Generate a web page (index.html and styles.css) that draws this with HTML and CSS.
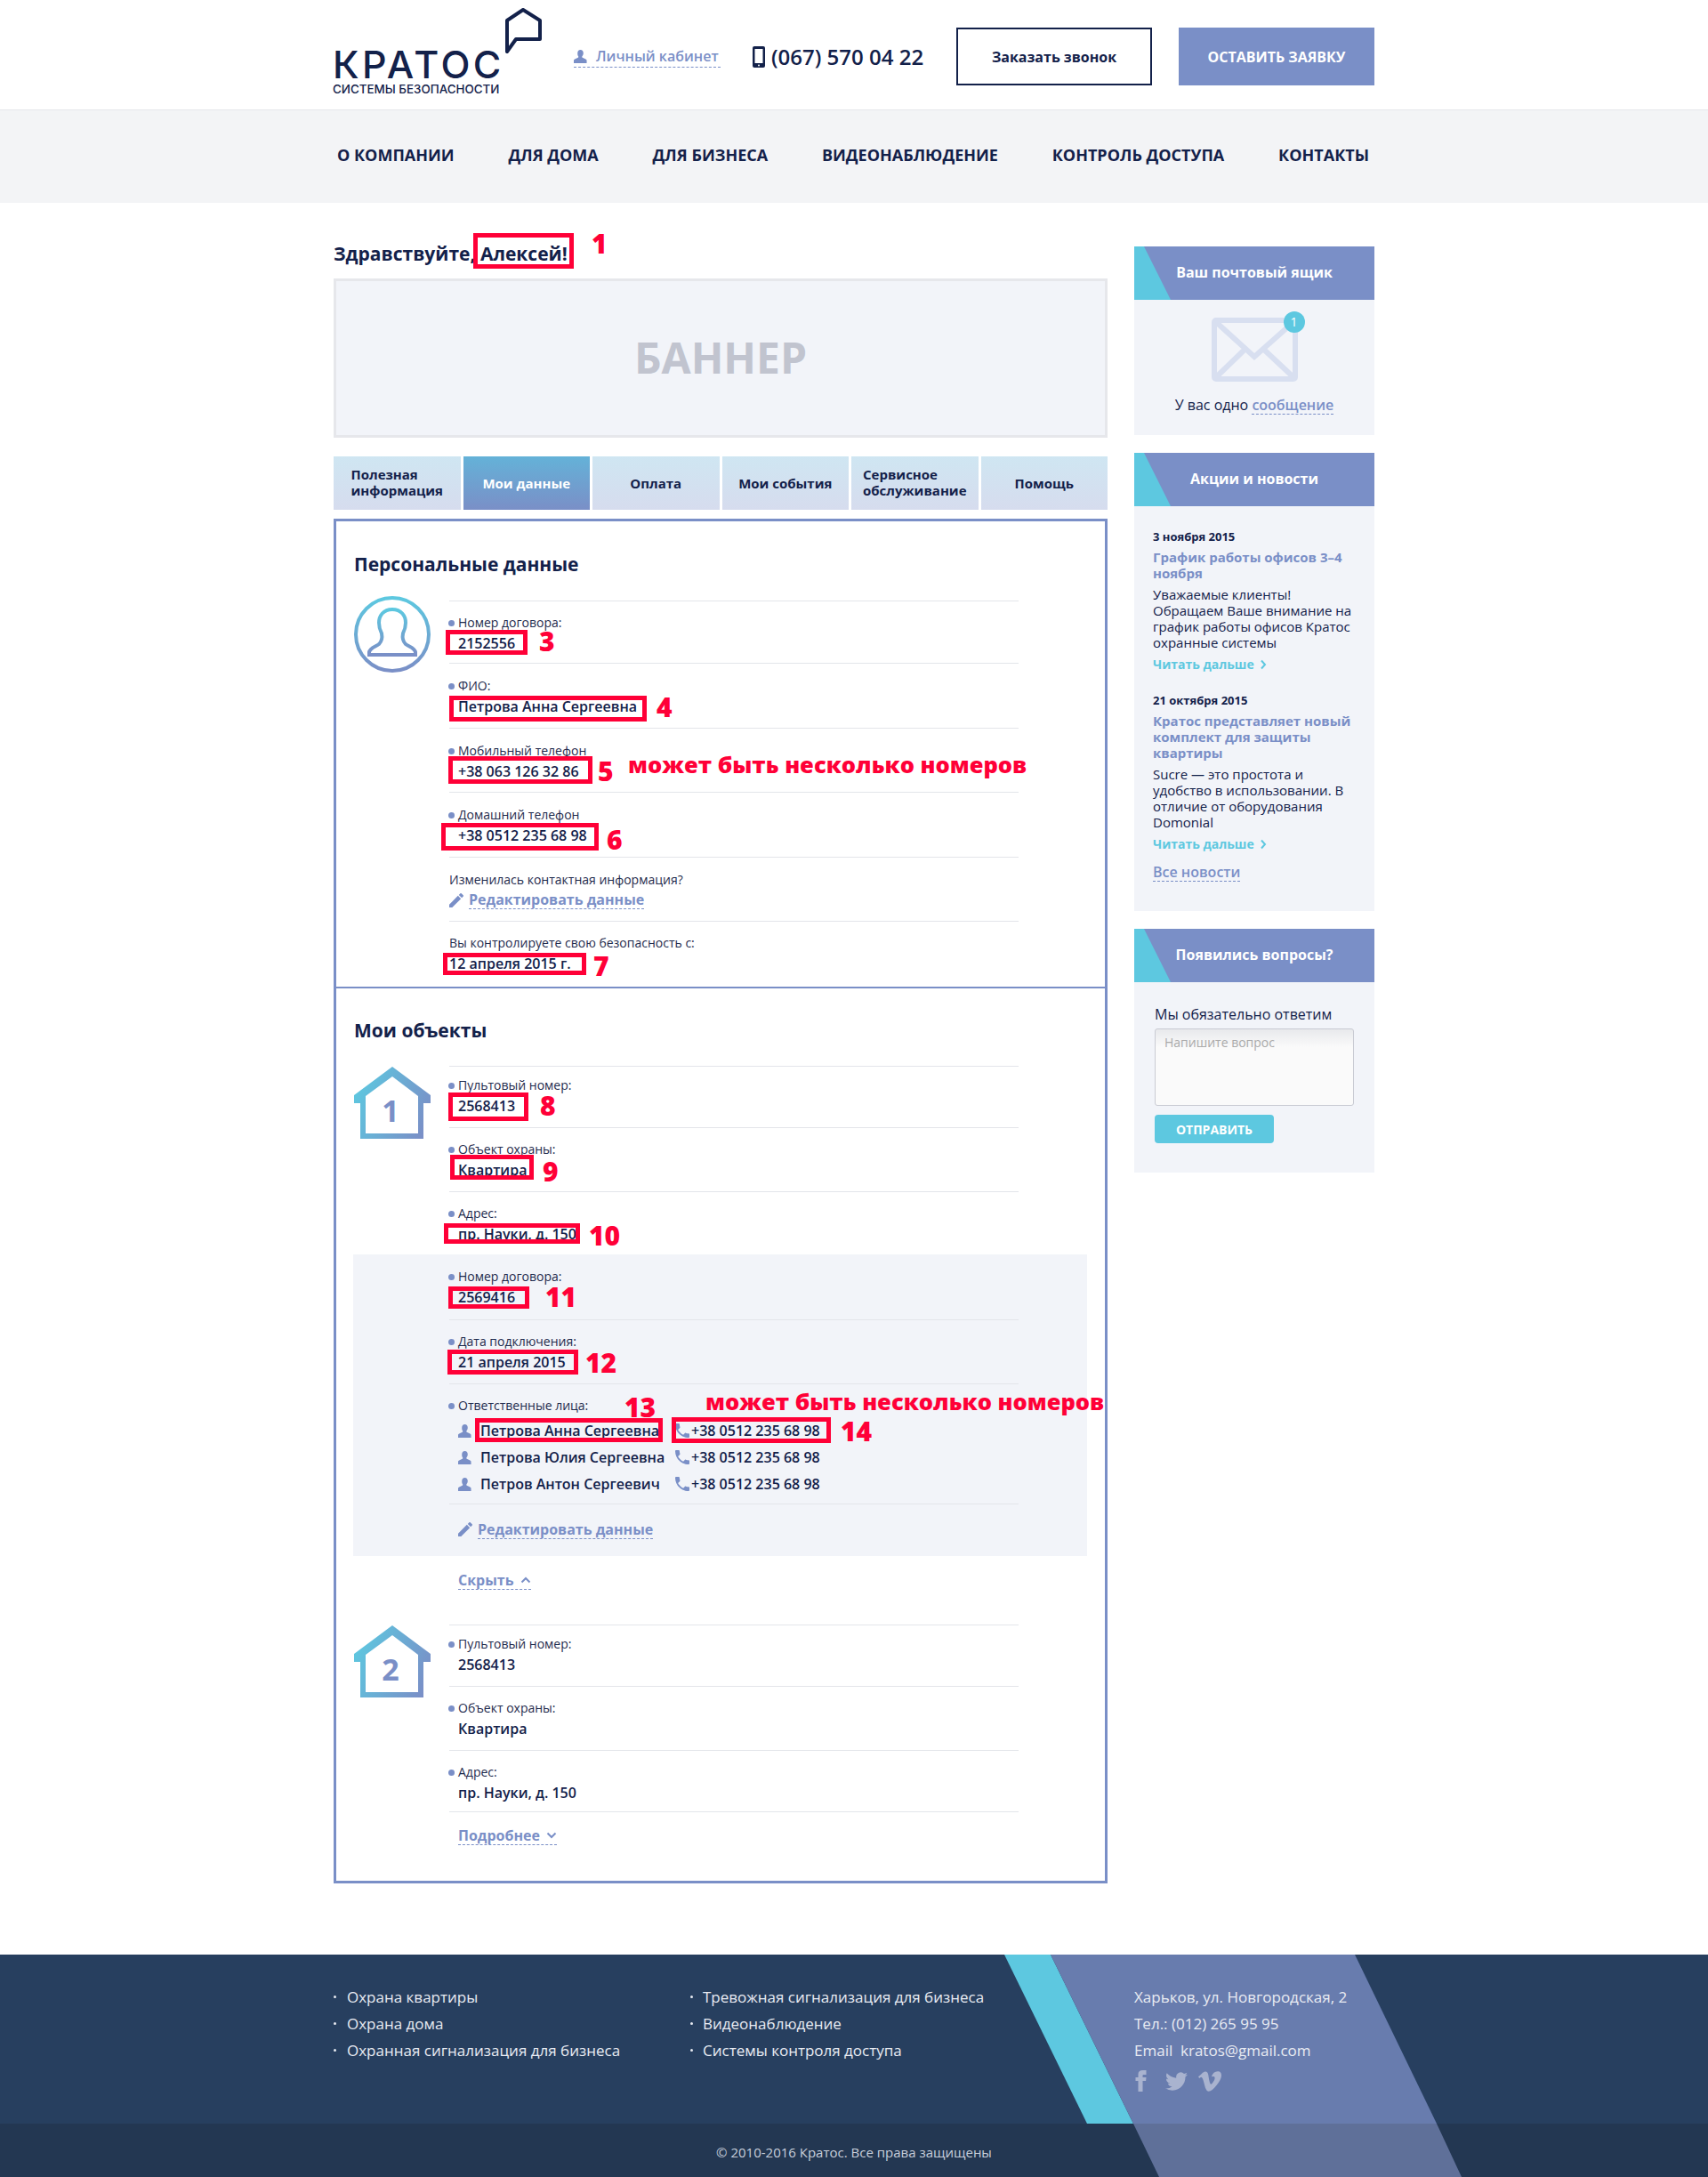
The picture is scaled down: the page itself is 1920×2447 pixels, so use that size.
FILE: index.html

```html
<!DOCTYPE html>
<html>

<head>
    <meta charset="utf-8">
    <title>Кратос - Личный кабинет</title>
    <link rel="stylesheet" href="styles.css">
</head>

<body>
    <svg class="defs" width="0" height="0">
        <defs>
            <linearGradient id="gradAvatar" x1="0" y1="0" x2="0" y2="1">
                <stop offset="0" stop-color="#5dc8e0" />
                <stop offset="1" stop-color="#7a8fc7" />
            </linearGradient>
            <linearGradient id="gradHouse" x1="0" y1="0.3" x2="1" y2="0.7">
                <stop offset="0" stop-color="#5dc8e0" />
                <stop offset="1" stop-color="#7a8fc7" />
            </linearGradient>
            <symbol id="iconPerson" viewBox="0 0 16 16">
                <path d="M8 0c2.2 0 3.5 1.8 3.5 4 0 1.6-.6 2.9-1.4 3.8-.4.6-.2 1.3.3 1.6l3.4 1.5c1.2.5 1.7 1.2 1.7 2.1v3H0v-3c0-.9.5-1.6 1.7-2.1l3.4-1.5c.5-.3.7-1 .3-1.6C4.6 6.900 4.500 5.600 4.500 4 4.500 1.800 5.800 0 8 0z" />
            </symbol>
            <symbol id="iconPhone" viewBox="3 3 18 18">
                <path d="M6.600 10.800c1.400 2.800 3.800 5.100 6.600 6.600l2.200-2.200c.3-.3.7-.4 1-.2 1.100.4 2.300.6 3.600.6.600 0 1 .4 1 1V20c0 .6-.4 1-1 1C10.600 21 3 13.400 3 4c0-.6.4-1 1-1h3.500c.6 0 1 .4 1 1 0 1.200.2 2.400.6 3.600.1.300 0 .7-.2 1z" />
            </symbol>
            <symbol id="iconPencil" viewBox="3 3 18 18">
                <path d="M3 17.250V21h3.750L17.810 9.940l-3.750-3.750L3 17.250zM20.710 7.040a1 1 0 000-1.410l-2.340-2.340a1 1 0 00-1.410 0l-1.830 1.830 3.750 3.750z" />
            </symbol>
        </defs>
    </svg>

    <div class="page">
        <header class="top">
            <div class="wrap top-row">
                <a class="logo">
                    <span class="logo-text">
                        <span class="logo-name">КРАТОС</span>
                        <span class="logo-sub">СИСТЕМЫ БЕЗОПАСНОСТИ</span>
                    </span>
                    <svg class="logo-pin" viewBox="0 0 41 52">
                        <path d="M20 2 L39 14 V35 H12 L2 49 V14 Z" fill="none" stroke="#13214a" stroke-width="4" stroke-linejoin="round" />
                    </svg>
                </a>
                <a class="cabinet">
                    <svg class="icon-person"><use href="#iconPerson" /></svg>
                    Личный кабинет
                </a>
                <div class="phone">
                    <svg class="phone-icon" viewBox="0 0 14 24">
                        <rect width="14" height="24" rx="2" fill="#13214a" />
                        <rect x="2.500" y="3" width="9" height="16" fill="#fff" />
                        <circle cx="7" cy="21.500" r="1" fill="#fff" />
                    </svg>
                    (067) 570 04 22
                </div>
                <a class="btn-call">Заказать звонок</a>
                <a class="btn-order">ОСТАВИТЬ ЗАЯВКУ</a>
            </div>
        </header>

        <nav class="menu">
            <div class="wrap menu-row">
                <a>О КОМПАНИИ</a>
                <a>ДЛЯ ДОМА</a>
                <a>ДЛЯ БИЗНЕСА</a>
                <a>ВИДЕОНАБЛЮДЕНИЕ</a>
                <a>КОНТРОЛЬ ДОСТУПА</a>
                <a>КОНТАКТЫ</a>
            </div>
        </nav>

        <div class="wrap content">
            <main class="main">
                <h1 class="hello">Здравствуйте, Алексей!</h1>
                <div class="banner">БАННЕР</div>

                <div class="tabs">
                    <a class="tab tab-left">Полезная<br>информация</a>
                    <a class="tab active">Мои данные</a>
                    <a class="tab">Оплата</a>
                    <a class="tab">Мои события</a>
                    <a class="tab tab-left">Сервисное<br>обслуживание</a>
                    <a class="tab">Помощь</a>
                </div>

                <div class="panel">
                    <section class="block block-personal">
                        <h2>Персональные данные</h2>
                        <div class="row">
                            <svg class="avatar" viewBox="0 0 86 86">
                                <circle cx="43" cy="43" r="41" fill="none" stroke="url(#gradAvatar)" stroke-width="4" />
                                <path d="M43 15 C33 15 28 22 28 30 C28 35 29 38 31 42 C32 47 31 51 28 54 C24 57 18 58 17 63 L17 66 L69 66 L69 63 C68 58 62 57 58 54 C55 51 54 47 55 42 C57 38 58 35 58 30 C58 22 53 15 43 15 Z" fill="none" stroke="url(#gradAvatar)" stroke-width="4" />
                            </svg>
                            <div class="fields">
                                <div class="field">
                                    <div class="label">Номер договора:</div>
                                    <div class="value">2152556</div>
                                </div>
                                <div class="field">
                                    <div class="label">ФИО:</div>
                                    <div class="value">Петрова Анна Сергеевна</div>
                                </div>
                                <div class="field">
                                    <div class="label">Мобильный телефон</div>
                                    <div class="value">+38 063 126 32 86</div>
                                </div>
                                <div class="field">
                                    <div class="label">Домашний телефон</div>
                                    <div class="value">+38 0512 235 68 98</div>
                                </div>
                                <div class="field field-note">
                                    <div class="note">Изменилась контактная информация?</div>
                                    <a class="edit">
                                        <svg class="icon-pencil"><use href="#iconPencil" /></svg>
                                        <span class="dash">Редактировать данные</span>
                                    </a>
                                </div>
                                <div class="field field-note">
                                    <div class="note">Вы контролируете свою безопасность с:</div>
                                    <div class="value value-flat">12 апреля 2015 г.</div>
                                </div>
                            </div>
                        </div>
                    </section>

                    <section class="block block-objects">
                        <h2>Мои объекты</h2>
                        <div class="row">
                            <svg class="house" viewBox="0 0 86 82">
                                <path d="M43 0 L86 32 V41 H78 V81 H7 V41 H0 V32 Z M43 11 L13 33 V75 H72 V33 Z" fill="url(#gradHouse)" fill-rule="evenodd" />
                                <text x="41" y="62" text-anchor="middle" class="house-num">1</text>
                            </svg>
                            <div class="fields">
                                <div class="field">
                                    <div class="label">Пультовый номер:</div>
                                    <div class="value">2568413</div>
                                </div>
                                <div class="field">
                                    <div class="label">Объект охраны:</div>
                                    <div class="value">Квартира</div>
                                </div>
                                <div class="field">
                                    <div class="label">Адрес:</div>
                                    <div class="value">пр. Науки, д. 150</div>
                                </div>
                            </div>
                        </div>

                        <div class="extra">
                            <div class="field">
                                <div class="label">Номер договора:</div>
                                <div class="value">2569416</div>
                            </div>
                            <div class="field">
                                <div class="label">Дата подключения:</div>
                                <div class="value">21 апреля 2015</div>
                            </div>
                            <div class="field field-people">
                                <div class="label">Ответственные лица:</div>
                                <div class="people">
                                    <svg class="icon-man"><use href="#iconPerson" /></svg>
                                    <span>Петрова Анна Сергеевна</span>
                                    <svg class="icon-tel"><use href="#iconPhone" /></svg>
                                    <span>+38 0512 235 68 98</span>

                                    <svg class="icon-man"><use href="#iconPerson" /></svg>
                                    <span>Петрова Юлия Сергеевна</span>
                                    <svg class="icon-tel"><use href="#iconPhone" /></svg>
                                    <span>+38 0512 235 68 98</span>

                                    <svg class="icon-man"><use href="#iconPerson" /></svg>
                                    <span>Петров Антон Сергеевич</span>
                                    <svg class="icon-tel"><use href="#iconPhone" /></svg>
                                    <span>+38 0512 235 68 98</span>
                                </div>
                            </div>
                            <div class="field field-edit">
                                <a class="edit">
                                    <svg class="icon-pencil"><use href="#iconPencil" /></svg>
                                    <span class="dash">Редактировать данные</span>
                                </a>
                            </div>
                        </div>

                        <a class="toggle toggle-hide">
                            Скрыть
                            <svg viewBox="0 0 12 8"><path d="M1.500 6.500 L6 2 L10.500 6.500" /></svg>
                        </a>

                        <div class="row">
                            <svg class="house" viewBox="0 0 86 82">
                                <path d="M43 0 L86 32 V41 H78 V81 H7 V41 H0 V32 Z M43 11 L13 33 V75 H72 V33 Z" fill="url(#gradHouse)" fill-rule="evenodd" />
                                <text x="41" y="62" text-anchor="middle" class="house-num">2</text>
                            </svg>
                            <div class="fields">
                                <div class="field">
                                    <div class="label">Пультовый номер:</div>
                                    <div class="value">2568413</div>
                                </div>
                                <div class="field">
                                    <div class="label">Объект охраны:</div>
                                    <div class="value">Квартира</div>
                                </div>
                                <div class="field">
                                    <div class="label">Адрес:</div>
                                    <div class="value">пр. Науки, д. 150</div>
                                </div>
                                <div class="field field-more">
                                    <a class="toggle">
                                        Подробнее
                                        <svg viewBox="0 0 12 8"><path d="M1.500 1.500 L6 6 L10.500 1.500" /></svg>
                                    </a>
                                </div>
                            </div>
                        </div>
                    </section>
                </div>
            </main>

            <aside class="side">
                <div class="box box-mail">
                    <div class="box-title">Ваш почтовый ящик</div>
                    <div class="mail-body">
                        <div class="mail-icon">
                            <svg viewBox="0 0 97 72">
                                <rect x="3" y="3" width="91" height="66" rx="2" fill="none" stroke="#d8dff0" stroke-width="6" />
                                <path d="M5 5 L48 44 L92 5 M5 67 L36 37 M92 67 L60 37" fill="none" stroke="#d8dff0" stroke-width="6" />
                            </svg>
                            <span class="mail-count">1</span>
                        </div>
                        <p>У вас одно <a class="mail-link">сообщение</a></p>
                    </div>
                </div>

                <div class="box box-news">
                    <div class="box-title">Акции и новости</div>
                    <div class="news-body">
                        <div class="news">
                            <div class="news-date">3 ноября 2015</div>
                            <a class="news-title">График работы офисов 3–4 ноября</a>
                            <p>Уважаемые клиенты!<br>Обращаем Ваше внимание на график работы офисов Кратос охранные системы</p>
                            <a class="news-more">Читать дальше
                                <svg viewBox="0 0 8 12"><path d="M2 1.500 L6 6 L2 10.500" /></svg>
                            </a>
                        </div>
                        <div class="news">
                            <div class="news-date">21 октября 2015</div>
                            <a class="news-title">Кратос представляет новый комплект для защиты квартиры</a>
                            <p>Sucre — это простота и удобство в использовании. В отличие от оборудования Domonial</p>
                            <a class="news-more">Читать дальше
                                <svg viewBox="0 0 8 12"><path d="M2 1.500 L6 6 L2 10.500" /></svg>
                            </a>
                        </div>
                        <a class="news-all">Все новости</a>
                    </div>
                </div>

                <div class="box box-ask">
                    <div class="box-title">Появились вопросы?</div>
                    <form class="ask-body">
                        <p>Мы обязательно ответим</p>
                        <textarea placeholder="Напишите вопрос"></textarea>
                        <button type="button">ОТПРАВИТЬ</button>
                    </form>
                </div>
            </aside>
        </div>

        <footer class="foot">
            <svg class="foot-art" viewBox="0 0 1920 250">
                <polygon points="1129,0 1181,0 1274,190 1222,190" fill="#5dc8e0" />
                <polygon points="1181,0 1523,0 1615,190 1274,190" fill="#687cae" />
                <polygon points="1274,190 1615,190 1643,250 1303,250" fill="#5f7099" />
            </svg>
            <div class="wrap foot-row">
                <ul class="foot-list foot-col1">
                    <li>Охрана квартиры</li>
                    <li>Охрана дома</li>
                    <li>Охранная сигнализация для бизнеса</li>
                </ul>
                <ul class="foot-list foot-col2">
                    <li>Тревожная сигнализация для бизнеса</li>
                    <li>Видеонаблюдение</li>
                    <li>Системы контроля доступа</li>
                </ul>
                <div class="foot-contacts">
                    <div>Харьков, ул. Новгородская, 2</div>
                    <div>Тел.: (012) 265 95 95</div>
                    <div>Email&nbsp; kratos@gmail.com</div>
                    <div class="social">
                        <svg class="soc-f" viewBox="5 0 14 24"><path d="M9 8H6v4h3v12h5V12h3.600l.4-4h-4V6.300c0-.96.2-1.300 1.100-1.300H18V0h-3.800C10.600 0 9 1.600 9 4.600z" /></svg>
                        <svg class="soc-t" viewBox="0 2 24 20"><path d="M23.953 4.570a10 10 0 01-2.825.775 4.958 4.958 0 002.163-2.723c-.951.555-2.005.959-3.127 1.184a4.920 4.920 0 00-8.384 4.482C7.690 8.095 4.067 6.130 1.640 3.162a4.822 4.822 0 00-.666 2.475c0 1.710.870 3.213 2.188 4.096a4.904 4.904 0 01-2.228-.616v.06a4.923 4.923 0 003.946 4.827 4.996 4.996 0 01-2.212.085 4.936 4.936 0 004.604 3.417 9.867 9.867 0 01-6.102 2.105c-.39 0-.779-.023-1.170-.067a13.995 13.995 0 007.557 2.209c9.053 0 13.998-7.496 13.998-13.985 0-.21 0-.42-.015-.63A9.935 9.935 0 0024 4.590z" /></svg>
                        <svg class="soc-v" viewBox="0 1.500 24 21"><path d="M23.977 6.416c-.105 2.338-1.739 5.543-4.894 9.609-3.268 4.247-6.026 6.370-8.290 6.370-1.409 0-2.578-1.294-3.553-3.881L5.322 11.400C4.603 8.816 3.834 7.522 3.010 7.522c-.179 0-.806.378-1.881 1.132L0 7.197c1.185-1.044 2.351-2.084 3.501-3.128C5.080 2.701 6.266 1.984 7.055 1.910c1.867-.18 3.016 1.100 3.447 3.838.465 2.953.789 4.789.971 5.507.539 2.450 1.131 3.674 1.776 3.674.502 0 1.256-.796 2.265-2.385 1.004-1.589 1.540-2.797 1.612-3.628.144-1.371-.395-2.061-1.614-2.061-.574 0-1.167.121-1.777.391 1.186-3.868 3.434-5.757 6.762-5.637 2.473.06 3.628 1.664 3.493 4.797l-.013.01z" /></svg>
                    </div>
                </div>
            </div>
            <div class="foot-copy">© 2010-2016 Кратос. Все права защищены</div>
        </footer>

        <!-- Красные пометки поверх макета -->
        <div class="mark m1"></div>
        <div class="mark m3"></div>
        <div class="mark m4"></div>
        <div class="mark m5"></div>
        <div class="mark m6"></div>
        <div class="mark m7"></div>
        <div class="mark m8"></div>
        <div class="mark m9"></div>
        <div class="mark m10"></div>
        <div class="mark m11"></div>
        <div class="mark m12"></div>
        <div class="mark m13"></div>
        <div class="mark m14"></div>
        <span class="num n1">1</span>
        <span class="num n3">3</span>
        <span class="num n4">4</span>
        <span class="num n5">5</span>
        <span class="num n6">6</span>
        <span class="num n7">7</span>
        <span class="num n8">8</span>
        <span class="num n9">9</span>
        <span class="num n10">10</span>
        <span class="num n11">11</span>
        <span class="num n12">12</span>
        <span class="num n13">13</span>
        <span class="num n14">14</span>
        <span class="num remark r1">может быть несколько номеров</span>
        <span class="num remark r2">может быть несколько номеров</span>
    </div>
</body>

</html>
```

FILE: styles.css

```css
* {
    box-sizing: border-box;
}

body {
    margin: 0;
    font-family: "Open Sans", Arial, sans-serif;
    font-size: 14px;
    color: #13214a;
    background-color: #fff;
}

p {
    margin: 0;
}

.defs {
    display: block;
    height: 0;
}

.page {
    position: relative;
    width: 1920px;
    height: 2447px;
    overflow: hidden;
}

.wrap {
    width: 1170px;
    margin: 0 auto;
}

/* Шапка */
.top {
    height: 124px;
    border-bottom: 1px solid #e6e7eb;
}

.top-row {
    display: flex;
    align-items: center;
    height: 123px;
    padding-top: 4px;
}

.logo {
    display: flex;
    align-items: flex-start;
    align-self: flex-start;
    padding-top: 5px;
}

.logo-text {
    display: flex;
    flex-direction: column;
    width: 193px;
    margin-top: 44px;
}

.logo-name {
    font-family: Inter, sans-serif;
    font-weight: 500;
    font-size: 43px;
    line-height: 38px;
    letter-spacing: 3.500px;
    margin-left: -1px;
}

.logo-sub {
    font-family: Inter, sans-serif;
    font-weight: 500;
    font-size: 13.400px;
    line-height: 12px;
    margin-top: 3px;
    margin-left: -1px;
    white-space: nowrap;
}

.logo-pin {
    width: 41px;
    height: 52px;
}

.cabinet {
    display: flex;
    align-items: center;
    gap: 10px;
    width: 165px;
    height: 24px;
    margin-left: 36px;
    color: #7a8fc7;
    font-size: 16px;
    font-weight: 600;
    border-bottom: 1px dashed #7a8fc7;
}

.icon-person {
    width: 15px;
    height: 15px;
    fill: #7a8fc7;
}

.phone {
    display: flex;
    align-items: center;
    gap: 7px;
    margin-left: 36px;
    font-size: 24px;
    font-weight: 600;
    white-space: nowrap;
}

.phone-icon {
    width: 14px;
    height: 24px;
}

.btn-call,
.btn-order {
    display: flex;
    align-items: center;
    justify-content: center;
    width: 220px;
    height: 65px;
    font-size: 16px;
    font-weight: 700;
}

.btn-call {
    margin-left: auto;
    border: 2px solid #13214a;
}

.btn-order {
    margin-left: 30px;
    color: #fff;
    background-color: #7a8fc7;
}

.menu {
    height: 104px;
    background-color: #f3f4f6;
}

.menu-row {
    display: flex;
    justify-content: space-between;
    align-items: center;
    height: 100px;
    padding: 0 6px 0 4px;
    font-size: 18px;
    font-weight: 700;
}

/* Основная часть */
.content {
    display: flex;
    justify-content: space-between;
    padding-top: 49px;
}

.main {
    width: 870px;
}

.side {
    width: 270px;
}

.hello {
    margin: 0 0 20px;
    font-size: 21px;
    font-weight: 700;
    line-height: 16px;
}

.banner {
    display: flex;
    align-items: center;
    justify-content: center;
    height: 179px;
    padding-bottom: 2px;
    font-size: 48px;
    font-weight: 700;
    color: #c1c4cf;
    background-color: #f2f4f9;
    border: 3px solid #e6e7eb;
}

.tabs {
    display: grid;
    grid-template-columns: repeat(6, 1fr);
    gap: 3px;
    margin: 21px 0 10px;
}

.tab {
    display: flex;
    align-items: center;
    justify-content: center;
    height: 60px;
    font-size: 15px;
    font-weight: 700;
    line-height: 18px;
    text-align: center;
    background: linear-gradient(#cfe6f2, #d6dcee);
}

.tab-left {
    padding-bottom: 2px;
    text-align: left;
}

.tab.active {
    color: #fff;
    background: linear-gradient(#64b2d8, #7a8fc7);
}

.panel {
    height: 1534px;
    border: 3px solid #7a8fc7;
}

.block {
    padding: 0 20px;
}

.block h2 {
    margin: 0;
    font-size: 21px;
    font-weight: 700;
    line-height: 28px;
}

.block-personal {
    height: 525px;
    padding-top: 34px;
    border-bottom: 2px solid #7a8fc7;
}

.block-personal h2 {
    margin-bottom: 27px;
}

.block-objects {
    padding-top: 33px;
}

.block-objects h2 {
    margin-bottom: 26px;
}

.row {
    display: flex;
    align-items: flex-start;
}

.avatar {
    width: 86px;
    height: 86px;
    margin: -5px 21px 0 0;
    flex: none;
}

.house {
    width: 86px;
    height: 82px;
    margin: 1px 21px 0 0;
    flex: none;
}

.house-num {
    font-size: 34px;
    font-weight: 700;
    fill: #7a8fc7;
}

.fields {
    width: 640px;
}

.field {
    padding: 14px 0 12px;
    border-top: 1px solid #e3e5ea;
}

.label {
    position: relative;
    padding-left: 10px;
    font-size: 14px;
    line-height: 20px;
    color: #1f2b4d;
}

.label::before {
    content: "";
    position: absolute;
    left: -1px;
    top: 7px;
    width: 7px;
    height: 7px;
    border-radius: 50%;
    background-color: #7a8fc7;
}

.value {
    margin-top: 1px;
    padding-left: 10px;
    font-size: 16px;
    font-weight: 600;
    line-height: 24px;
}

.value-flat {
    padding-left: 0;
}

.note {
    font-size: 14px;
    line-height: 20px;
    color: #1f2b4d;
}

.block-personal .field {
    padding: 15px 0 11.500px;
}

.block-personal .field:first-child {
    padding: 14px 0 10px;
}

.block-personal .field:last-child {
    padding: 14px 0 14px;
}

.edit {
    display: flex;
    align-items: center;
    gap: 6px;
    min-height: 24px;
    margin-top: 1px;
    color: #7a8fc7;
    font-size: 16px;
    font-weight: 700;
}

.icon-pencil {
    width: 16px;
    height: 16px;
    fill: #7a8fc7;
}

.dash {
    line-height: 20px;
    border-bottom: 1px dashed #7a8fc7;
}

/* Объекты */
.block-objects .row .field:first-child {
    padding-top: 11px;
}

.block-objects .row .field:nth-child(3) {
    padding-bottom: 9px;
}

.extra {
    height: 339px;
    margin: 2px 0 0 -1px;
    padding-left: 108px;
    background-color: #f2f4f9;
}

.extra .field {
    width: 640px;
}

.extra .field:first-child {
    padding: 15px 0 13px;
    border-top: 0;
}

.field-people {
    padding-bottom: 7px;
}

.people {
    display: grid;
    grid-template-columns: 25px 219px 18px auto;
    grid-auto-rows: 30px;
    align-items: center;
    margin-top: 3px;
    padding-left: 10px;
    font-size: 16px;
    font-weight: 600;
}

.icon-man {
    width: 15px;
    height: 17px;
    fill: #7a8fc7;
}

.icon-tel {
    width: 16px;
    height: 16px;
    fill: #7a8fc7;
}

.field-edit {
    padding: 15px 0 0 10px;
}

.toggle {
    display: inline-flex;
    align-items: center;
    gap: 7px;
    height: 21px;
    color: #7a8fc7;
    font-size: 16px;
    font-weight: 700;
    border-bottom: 1px dashed #7a8fc7;
}

.toggle svg {
    width: 12px;
    height: 8px;
    fill: none;
    stroke: #7a8fc7;
    stroke-width: 2;
}

.toggle-hide {
    display: flex;
    width: 82px;
    margin: 17px 0 39px 117px;
}

.field-more {
    padding: 16px 0 0 10px;
}

/* Правая колонка */
.box {
    margin-bottom: 20px;
    background-color: #f2f4f9;
}

.box-title {
    position: relative;
    height: 60px;
    font-size: 16px;
    font-weight: 700;
    line-height: 58px;
    text-align: center;
    color: #fff;
    background-color: #7a8fc7;
}

.box-title::before {
    content: "";
    position: absolute;
    left: 0;
    top: 0;
    width: 41px;
    height: 60px;
    background-color: #5dc8e0;
    clip-path: polygon(0 0, 11px 0, 41px 60px, 0 60px);
}

.mail-body {
    height: 152px;
    padding-top: 20px;
    text-align: center;
    font-size: 16px;
}

.mail-icon {
    position: relative;
    width: 97px;
    height: 72px;
    margin: 0 auto 16px;
}

.mail-icon svg {
    display: block;
}

.mail-count {
    position: absolute;
    right: -8px;
    top: -7px;
    width: 24px;
    height: 24px;
    border-radius: 50%;
    font-size: 14px;
    line-height: 24px;
    color: #fff;
    background-color: #5dc8e0;
}

.mail-body p {
    line-height: 20px;
}

.mail-link {
    display: inline-block;
    color: #7a8fc7;
    font-weight: 600;
    border-bottom: 1px dashed #7a8fc7;
}

.news-body {
    height: 455px;
    padding: 25px 20px 0 21px;
    font-size: 15px;
    line-height: 18px;
}

.news {
    margin-bottom: 22px;
}

.news:last-of-type {
    margin-bottom: 12px;
}

.news-date {
    font-size: 13px;
    font-weight: 700;
}

.news-title {
    display: block;
    margin-top: 5px;
    font-weight: 700;
    color: #7a8fc7;
}

.news p {
    margin-top: 6px;
}

.news-more {
    display: flex;
    align-items: center;
    gap: 6px;
    margin-top: 7px;
    font-size: 14px;
    font-weight: 700;
    color: #5dc8e0;
}

.news-more svg {
    width: 8px;
    height: 12px;
    fill: none;
    stroke: #5dc8e0;
    stroke-width: 2;
}

.news-all {
    display: inline-block;
    font-size: 16px;
    line-height: 20px;
    font-weight: 600;
    color: #7a8fc7;
    border-bottom: 1px dashed #7a8fc7;
}

.ask-body {
    height: 214px;
    padding: 27px 23px 0;
}

.ask-body p {
    font-size: 16px;
    line-height: 18px;
}

.ask-body textarea {
    display: block;
    width: 224px;
    height: 87px;
    margin: 7px 0 10px;
    padding: 5px 10px;
    font-family: inherit;
    font-size: 14px;
    border: 1px solid #c9cbd3;
    border-radius: 3px;
    background: linear-gradient(#e8e9ec, #fafafa 20px);
    resize: none;
}

.ask-body textarea::placeholder {
    color: #aaa;
}

.ask-body button {
    width: 134px;
    height: 32px;
    padding: 0;
    font-family: inherit;
    font-size: 14px;
    font-weight: 700;
    color: #fff;
    background-color: #5dc8e0;
    border: 0;
    border-radius: 4px;
}

/* Подвал */
.foot {
    position: relative;
    height: 250px;
    margin-top: 80px;
    background: linear-gradient(#273f5f 190px, #233752 190px);
    color: #e8ebf2;
    font-size: 17px;
    line-height: 30px;
}

.foot-art {
    position: absolute;
    left: 0;
    top: 0;
    width: 1920px;
    height: 250px;
}

.foot-row {
    position: relative;
    display: flex;
    height: 190px;
    padding-top: 33px;
}

.foot-list {
    margin: 0;
    padding: 0;
    list-style: none;
}

.foot-list li {
    position: relative;
    padding-left: 15px;
}

.foot-list li::before {
    content: "";
    position: absolute;
    left: 0;
    top: 13px;
    width: 3px;
    height: 3px;
    border-radius: 50%;
    background-color: #e8ebf2;
}

.foot-col1 {
    width: 401px;
}

.foot-col2 {
    width: 499px;
}

.foot-col2 li {
    padding-left: 14px;
}

.social {
    display: flex;
    align-items: center;
    gap: 20px;
    margin-top: 7px;
}

.social svg {
    fill: #a9b3cf;
}

.soc-f {
    width: 15px;
    height: 24px;
}

.soc-t {
    width: 25px;
    height: 21px;
}

.soc-v {
    width: 26px;
    height: 23px;
    margin-left: -8px;
}

.foot-copy {
    position: relative;
    height: 60px;
    font-size: 15px;
    line-height: 64px;
    text-align: center;
    color: #c8cfdc;
}

/* Пометки */
.mark {
    position: absolute;
    border: 5px solid #ff0037;
}

.m1 { left: 532px; top: 262px; width: 113px; height: 40px; }
.m3 { left: 501px; top: 708px; width: 92px; height: 28px; }
.m4 { left: 505px; top: 782px; width: 222px; height: 29px; }
.m5 { left: 504px; top: 850px; width: 162px; height: 31px; }
.m6 { left: 496px; top: 925px; width: 177px; height: 31px; }
.m7 { left: 498px; top: 1071px; width: 161px; height: 25px; }
.m8 { left: 504px; top: 1228px; width: 90px; height: 32px; }
.m9 { left: 506px; top: 1298px; width: 94px; height: 28px; }
.m10 { left: 499px; top: 1375px; width: 153px; height: 23px; }
.m11 { left: 504px; top: 1446px; width: 91px; height: 25px; }
.m12 { left: 503px; top: 1517px; width: 147px; height: 28px; }
.m13 { left: 534px; top: 1594px; width: 211px; height: 27px; }
.m14 { left: 755px; top: 1593px; width: 179px; height: 29px; }

.num {
    position: absolute;
    font-size: 30px;
    font-weight: 800;
    line-height: 28px;
    color: #ff0037;
    white-space: nowrap;
}

.remark {
    font-size: 25.500px;
}

.n1 { left: 665px; top: 260px; }
.n3 { left: 606px; top: 707px; }
.n4 { left: 738px; top: 781px; }
.n5 { left: 672px; top: 853px; }
.n6 { left: 682px; top: 930px; }
.n7 { left: 667px; top: 1072px; }
.n8 { left: 607px; top: 1229px; }
.n9 { left: 610px; top: 1303px; }
.n10 { left: 662px; top: 1375px; }
.n11 { left: 613px; top: 1444px; }
.n12 { left: 658px; top: 1518px; }
.n13 { left: 702px; top: 1568px; }
.n14 { left: 945px; top: 1595px; }
.r1 { left: 706px; top: 845px; }
.r2 { left: 793px; top: 1561px; }
```
